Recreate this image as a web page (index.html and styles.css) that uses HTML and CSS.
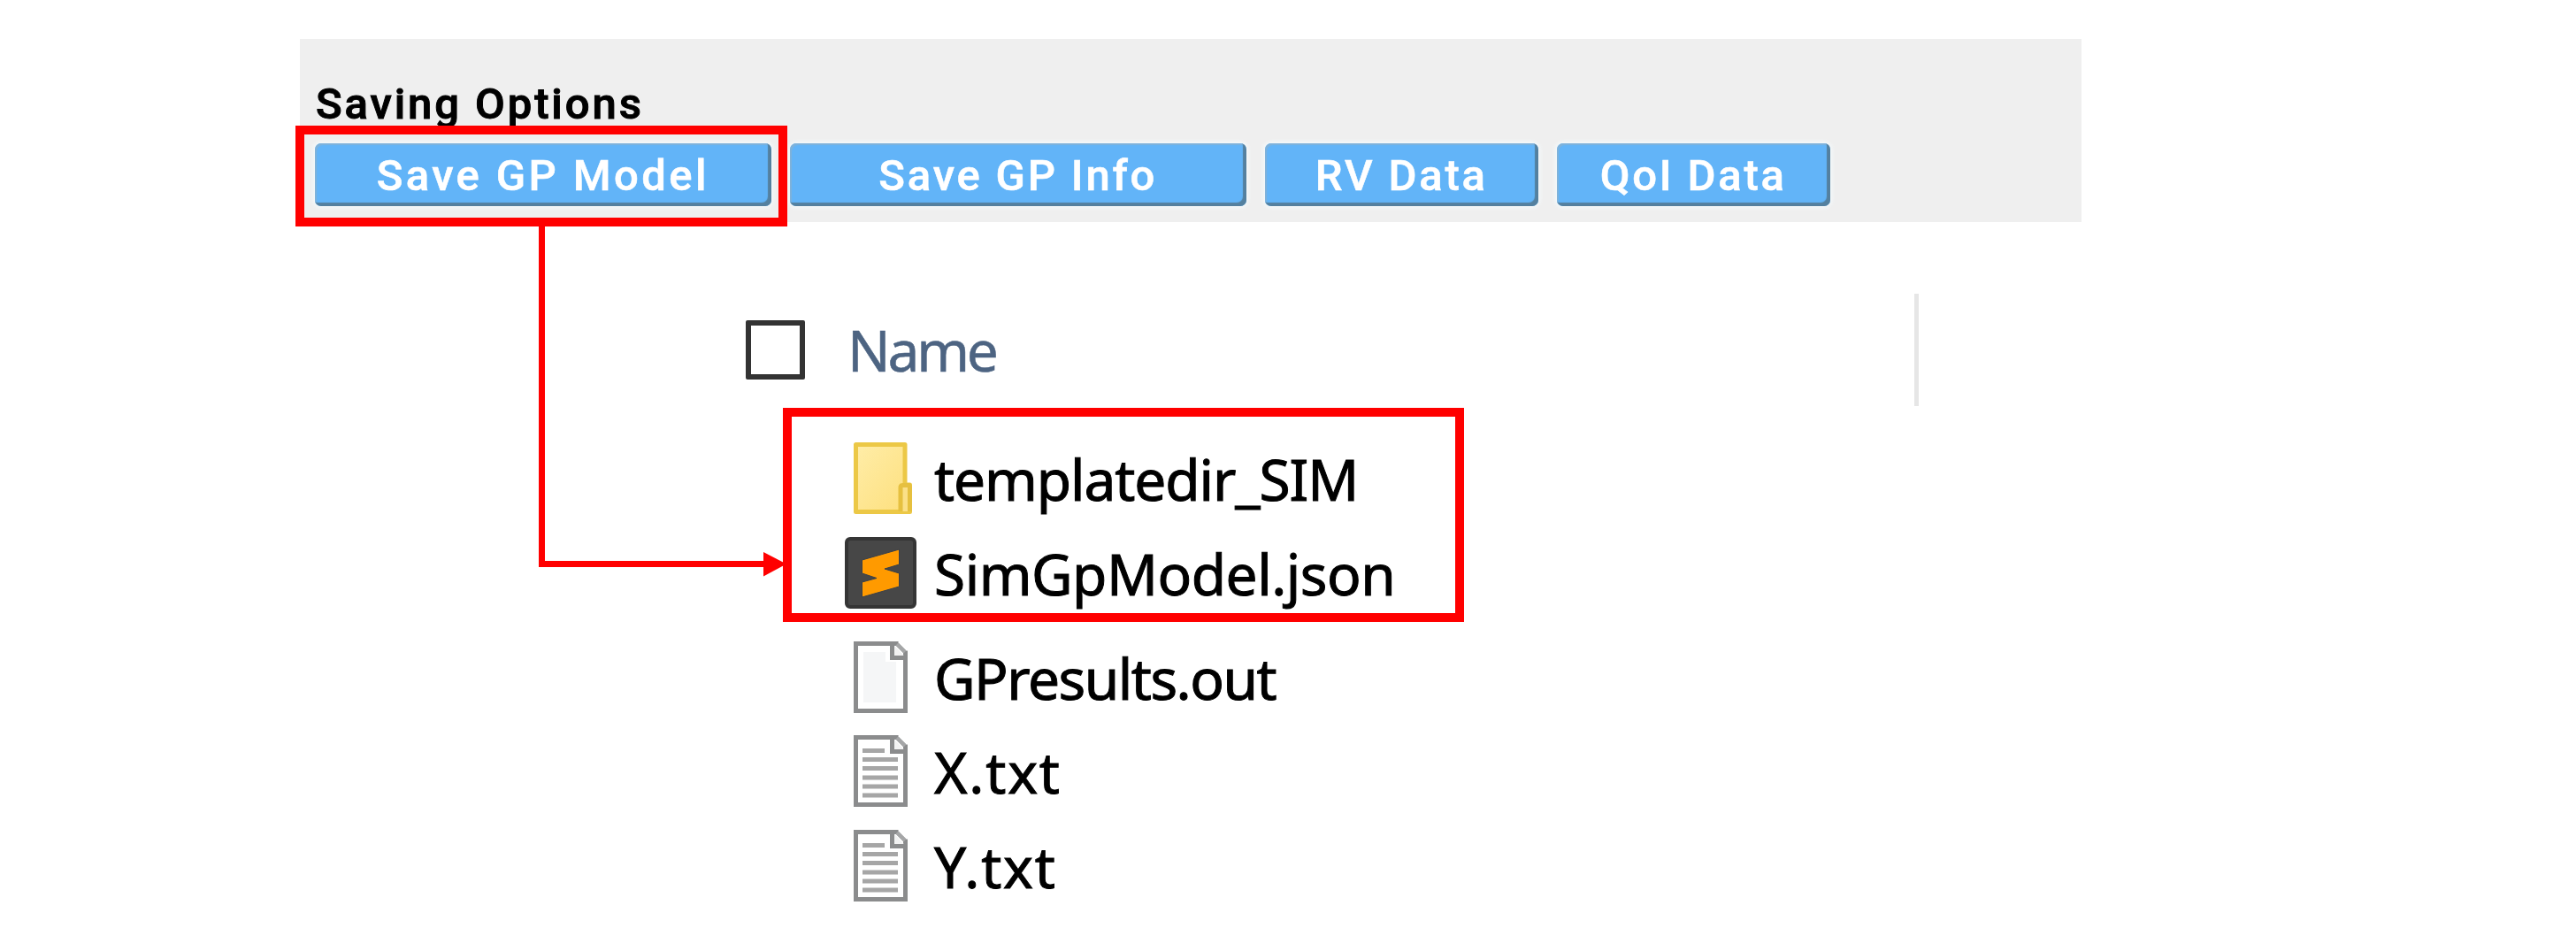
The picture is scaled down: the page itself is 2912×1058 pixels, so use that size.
FILE: index.html
```html
<!DOCTYPE html>
<html lang="en">
<head>
<meta charset="utf-8">
<title>Saving Options</title>
<link rel="stylesheet" href="styles.css">
</head>
<body>
<main class="stage">
  <section class="panel">
    <h1 class="heading">Saving Options</h1>
    <div class="buttons">
      <button class="btn wide model">Save GP Model</button>
      <button class="btn wide">Save GP Info</button>
      <button class="btn">RV Data</button>
      <button class="btn">QoI Data</button>
    </div>
  </section>

  <section class="files">
    <header class="files-head">
      <span class="checkbox"></span>
      <span class="column">Name</span>
      <span class="divider"></span>
    </header>
    <ul class="list">
      <li class="row">
        <svg class="icon" viewBox="0 0 81 81">
          <defs><linearGradient id="fold" x1="0" y1="0" x2="1" y2="1"><stop offset="0" stop-color="#ffeda8"/><stop offset="1" stop-color="#fddf7c"/></linearGradient></defs>
          <path d="M12.500 2.500H68V48H73.500V78.500H12.500Z" fill="url(#fold)" stroke="#ecc846" stroke-width="5" stroke-linejoin="round"/>
          <path d="M63 78V51Q63 48.500 65.500 48.500H71Q73.500 48.500 73.500 51V78" fill="#fbe088" stroke="#e6c03f" stroke-width="5"/>
        </svg>
        <span class="name folder">templatedir_SIM</span>
      </li>
      <li class="row">
        <svg class="icon" viewBox="0 0 81 81">
          <rect x="2" y="2" width="77" height="77" rx="4" fill="#474747" stroke="#353535" stroke-width="4"/>
          <path d="M19.500 26L61.500 14V31L45 36L61.500 41V56L19.500 68V51L36 46.500L19.500 41Z" fill="#ff9a00" stroke="#3a4048" stroke-width="1"/>
        </svg>
        <span class="name json">SimGpModel.json</span>
      </li>
      <li class="row spaced">
        <svg class="icon" viewBox="0 0 81 81">
          <path d="M12.500 2.500H59L68.500 12V78.500H12.500Z" fill="#fff" stroke="#8b8c8d" stroke-width="5"/>
          <path d="M21 12H46V23H58V69H21Z" fill="#f5f6f7"/>
          <path d="M53.500 2V18.500H69" fill="#f2f2f2" stroke="#8b8c8d" stroke-width="5"/>
          <path d="M60 1L70 11V0Z" fill="#fff"/>
          <path d="M59 3L68 12" stroke="#a5a6a7" stroke-width="4"/>
        </svg>
        <span class="name out">GPresults.out</span>
      </li>
      <li class="row">
        <svg class="icon" viewBox="0 0 81 81">
          <path d="M12.500 2.500H59L68.500 12V78.500H12.500Z" fill="#fff" stroke="#8b8c8d" stroke-width="5"/>
          <path d="M53.500 2V18.500H69" fill="#f2f2f2" stroke="#8b8c8d" stroke-width="5"/>
          <path d="M60 1L70 11V0Z" fill="#fff"/>
          <path d="M59 3L68 12" stroke="#a5a6a7" stroke-width="4"/>
          <path d="M20 17.500H45M20 27.500H60M20 37.500H60M20 48H60M20 58H60M20 68H60" stroke="#a6a6a6" stroke-width="5"/>
        </svg>
        <span class="name text">X.txt</span>
      </li>
      <li class="row">
        <svg class="icon" viewBox="0 0 81 81">
          <path d="M12.500 2.500H59L68.500 12V78.500H12.500Z" fill="#fff" stroke="#8b8c8d" stroke-width="5"/>
          <path d="M53.500 2V18.500H69" fill="#f2f2f2" stroke="#8b8c8d" stroke-width="5"/>
          <path d="M60 1L70 11V0Z" fill="#fff"/>
          <path d="M59 3L68 12" stroke="#a5a6a7" stroke-width="4"/>
          <path d="M20 17.500H45M20 27.500H60M20 37.500H60M20 48H60M20 58H60M20 68H60" stroke="#a6a6a6" stroke-width="5"/>
        </svg>
        <span class="name text">Y.txt</span>
      </li>
    </ul>
  </section>

  <div class="mark mark-button"></div>
  <div class="mark mark-files"></div>
  <svg class="arrow" viewBox="0 0 281 396"><path d="M4.500 0V381.500H256" fill="none" stroke="#f00" stroke-width="7"/><path d="M255 368L281 381.500L255 395.500Z" fill="#f00"/></svg>
</main>
</body>
</html>
```
FILE: styles.css
```css
* { box-sizing: border-box; }
body { margin: 0; background: #fff; }
.stage {
  position: relative;
  display: flex;
  flex-direction: column;
  width: 2912px;
  height: 1058px;
  overflow: hidden;
}
.panel {
  width: 2014px;
  height: 207px;
  margin: 44px 0 0 339px;
  padding: 44px 0 0 17px;
  background: #efefef;
  font-family: Roboto, "Liberation Sans", sans-serif;
}
.heading {
  margin: 0;
  height: 74px;
  padding-left: 1px;
  font-size: 49px;
  font-weight: 500;
  line-height: 60px;
  letter-spacing: 2.900px;
  color: #000;
  -webkit-text-stroke: 1px #000;
}
.buttons { display: flex; gap: 21.500px; }
.btn {
  width: 308.500px;
  height: 71px;
  padding: 2px 0 0;
  border: 0;
  border-radius: 7px;
  background: #62b4f8;
  box-shadow: inset -4px -4px 1px #54809f, inset 2px 2px 1px #7fb2da, 0 0 4px 2px #f4fafc;
  color: #fff;
  font: 500 49px/68px Roboto, "Liberation Sans", sans-serif;
  letter-spacing: 2.800px;
  white-space: nowrap;
  -webkit-text-stroke: .6px #fff;
}
.btn.wide { width: 515.500px; }
.btn.model { letter-spacing: 3.400px; }
.files {
  width: 1326px;
  margin-left: 843px;
  font-family: "Noto Sans", "Open Sans", sans-serif;
  font-size: 64px;
}
.files-head { display: flex; margin-top: 81px; height: 127px; }
.checkbox { width: 67px; height: 67px; margin-top: 30px; border: 6px solid #333; border-radius: 2px; }
.column {
  margin-left: 48px;
  line-height: 127px;
  letter-spacing: -3.200px;
  color: #4d6482;
  -webkit-text-stroke: .5px #4d6482;
}
.divider { width: 5px; margin-left: auto; background: #e6e6e6; }
.list { margin: 41px 0 0; padding: 0 0 0 112px; list-style: none; }
.row { display: flex; height: 81px; margin-bottom: 25.500px; align-items: center; }
.row.spaced { margin-top: 37px; }
.icon { width: 81px; height: 81px; flex: none; }
.name {
  margin-left: 20px;
  padding-top: 2px;
  line-height: 79px;
  color: #000;
  -webkit-text-stroke: 1px #000;
}
.name.folder { letter-spacing: -1.100px; }
.name.json { letter-spacing: -.5px; }
.name.out { letter-spacing: -1.500px; }
.name.text { letter-spacing: 1.800px; }
.mark { position: absolute; border: 10px solid #f00; }
.mark-button { left: 334px; top: 142px; width: 556px; height: 114px; }
.mark-files { left: 885px; top: 461px; width: 770px; height: 242px; }
.arrow { position: absolute; left: 608px; top: 256px; width: 281px; height: 396px; }
```
